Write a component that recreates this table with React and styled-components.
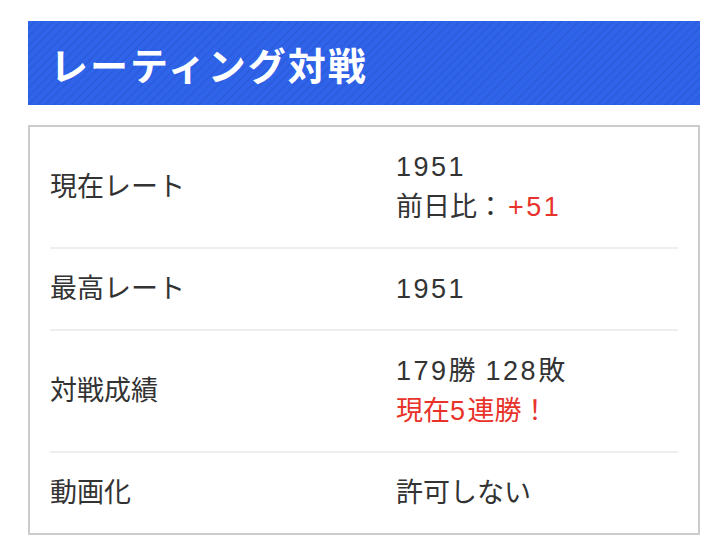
import React from "react";
import styled, { createGlobalStyle } from "styled-components";

const Global = createGlobalStyle`
  html, body { margin: 0; padding: 0; background: #fff; }
  body { font-family: "Liberation Sans", "Noto Sans CJK JP", sans-serif; color: #333; }
`;

const Page = styled.div`
  padding: 21px 26px 20px 28px;
  display: flex;
  flex-direction: column;
  gap: 20px;
`;

const Header = styled.h2`
  margin: 0;
  height: 84px;
  display: flex;
  align-items: center;
  padding: 0 22px;
  color: #fff;
  font-size: 38px;
  font-weight: bold;
  letter-spacing: 2px;
  background-color: #2e63ea;
  background-image: repeating-linear-gradient(
    -45deg,
    rgba(0, 0, 40, 0.06) 0px,
    rgba(0, 0, 40, 0.06) 2px,
    transparent 2px,
    transparent 6px
  );
`;

const Box = styled.div`
  border: 2px solid #cccccc;
  padding: 0 20px;
`;

const Row = styled.div`
  display: flex;
  align-items: center;
  padding: 20px 0;
  border-bottom: ${(p) => (p.$last ? "none" : "2px solid #eeeeee")};
  font-size: 27px;
  line-height: 40px;
`;

const Label = styled.div`
  flex: 0 0 346px;
`;

const Value = styled.div`
  display: flex;
  flex-direction: column;
`;

const Num = styled.span`
  letter-spacing: 2.5px;
`;

const Gap = styled.span`
  display: inline-block;
  width: 10px;
`;

const Colon = styled.span`
  margin-right: 4px;
`;

const Red = styled.span`
  color: #e8332a;
`;

export default function App() {
  return (
    <>
      <Global />
      <Page>
        <Header>レーティング対戦</Header>
        <Box>
          <Row>
            <Label>現在レート</Label>
            <Value>
              <Num>1951</Num>
              <span>
                前日比<Colon>：</Colon><Red><Num>+51</Num></Red>
              </span>
            </Value>
          </Row>
          <Row>
            <Label>最高レート</Label>
            <Value>
              <Num>1951</Num>
            </Value>
          </Row>
          <Row>
            <Label>対戦成績</Label>
            <Value>
              <span>
                <Num>179</Num>勝<Gap /><Num>128</Num>敗
              </span>
              <Red>
                現在<Num>5</Num>連勝！
              </Red>
            </Value>
          </Row>
          <Row $last>
            <Label>動画化</Label>
            <Value>
              <span>許可しない</span>
            </Value>
          </Row>
        </Box>
      </Page>
    </>
  );
}
